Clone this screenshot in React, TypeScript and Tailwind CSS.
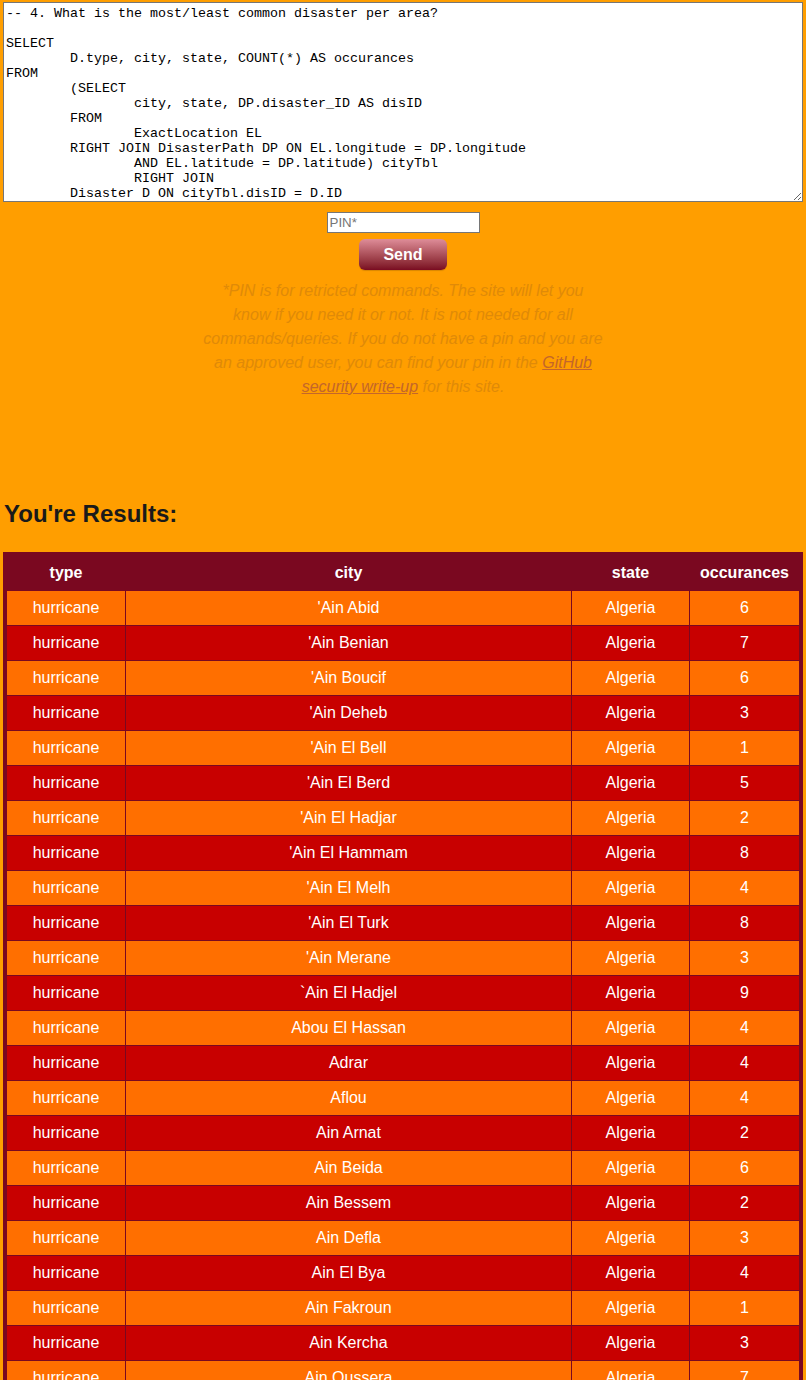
import { useState } from "react";

/* ── Query + results data ───────────────────────────────── */
const QUERY = `-- 4. What is the most/least common disaster per area?

SELECT
\tD.type, city, state, COUNT(*) AS occurances
FROM
\t(SELECT
\t\tcity, state, DP.disaster_ID AS disID
\tFROM
\t\tExactLocation EL
\tRIGHT JOIN DisasterPath DP ON EL.longitude = DP.longitude
\t\tAND EL.latitude = DP.latitude) cityTbl
\t\tRIGHT JOIN
\tDisaster D ON cityTbl.disID = D.ID
GROUP BY D.type, city, state
ORDER BY city;`;

const HEADERS = ["type", "city", "state", "occurances"];

const ROWS: [string, string, string, number][] = [
  ["hurricane", "'Ain Abid", "Algeria", 6],
  ["hurricane", "'Ain Benian", "Algeria", 7],
  ["hurricane", "'Ain Boucif", "Algeria", 6],
  ["hurricane", "'Ain Deheb", "Algeria", 3],
  ["hurricane", "'Ain El Bell", "Algeria", 1],
  ["hurricane", "'Ain El Berd", "Algeria", 5],
  ["hurricane", "'Ain El Hadjar", "Algeria", 2],
  ["hurricane", "'Ain El Hammam", "Algeria", 8],
  ["hurricane", "'Ain El Melh", "Algeria", 4],
  ["hurricane", "'Ain El Turk", "Algeria", 8],
  ["hurricane", "'Ain Merane", "Algeria", 3],
  ["hurricane", "`Ain El Hadjel", "Algeria", 9],
  ["hurricane", "Abou El Hassan", "Algeria", 4],
  ["hurricane", "Adrar", "Algeria", 4],
  ["hurricane", "Aflou", "Algeria", 4],
  ["hurricane", "Ain Arnat", "Algeria", 2],
  ["hurricane", "Ain Beida", "Algeria", 6],
  ["hurricane", "Ain Bessem", "Algeria", 2],
  ["hurricane", "Ain Defla", "Algeria", 3],
  ["hurricane", "Ain El Bya", "Algeria", 4],
  ["hurricane", "Ain Fakroun", "Algeria", 1],
  ["hurricane", "Ain Kercha", "Algeria", 3],
  ["hurricane", "Ain Oussera", "Algeria", 7],
  ["hurricane", "Ain Sefra", "Algeria", 2],
  ["hurricane", "Ain Smara", "Algeria", 5],
];

/* ── Main component ──────────────────────────────────────── */
export default function App() {
  const [query, setQuery] = useState(QUERY);
  const [pin, setPin]     = useState("");

  return (
    <div className="min-h-[1380px] bg-[#ff9e00] font-['Liberation_Sans',Arial,sans-serif] pt-[2px] pb-10">

      {/* ── Query box ── */}
      <div className="px-[3px]">
        <textarea
          value={query}
          onChange={(e) => setQuery(e.target.value)}
          spellCheck={false}
          className="block w-full h-[200px] bg-white border border-[#767676] pt-[3px] px-[2px] pb-0 font-['Liberation_Mono','Courier_New',monospace] text-[13.33px] leading-[15px] text-black whitespace-pre overflow-hidden resize outline-none [tab-size:8]"
        />
      </div>

      {/* ── PIN + send ── */}
      <div className="flex flex-col items-center">
        <input
          value={pin}
          onChange={(e) => setPin(e.target.value)}
          placeholder="PIN*"
          className="mt-[10px] w-[153px] h-[21px] bg-white border border-[#767676] px-[2px] text-[13.33px] text-black placeholder:text-[#757575] outline-none"
        />
        <button className="mt-[6px] w-[88px] h-[31px] rounded-[6px] bg-gradient-to-b from-[#de8d99] to-[#790a21] text-white font-bold text-[16px] shadow-[0_1px_1px_rgba(0,0,0,0.15)]">
          Send
        </button>
        <p className="mt-[9px] w-[401px] text-center italic text-[16px] leading-[24px] text-[#e08a08]">
          *PIN is for retricted commands. The site will let you know if you need it or not. It is not needed for all commands/queries. If you do not have a pin and you are an approved user, you can find your pin in the{" "}
          <a href="#" className="underline text-[#c4662a]">GitHub security write-up</a>{" "}
          for this site.
        </p>
      </div>

      {/* ── Results ── */}
      <h2 className="mt-[101px] ml-[4px] text-[24px] leading-[28px] font-bold text-[#1a1a1a]">
        You're Results:
      </h2>

      <div className="mt-[24px] mx-[3px] grid grid-cols-[118px_445px_117px_109px] gap-px bg-[#7a0820] p-[4px] text-white text-[16px]">
        {HEADERS.map((h) => (
          <div key={h} className="h-[34px] flex items-center justify-center font-bold">
            {h}
          </div>
        ))}
        {ROWS.map((row, i) =>
          row.map((cell, j) => (
            <div
              key={`${i}-${j}`}
              className={`h-[34px] flex items-center justify-center ${
                i % 2 === 0 ? "bg-[#ff6f00]" : "bg-[#c80000]"
              }`}
            >
              {cell}
            </div>
          ))
        )}
      </div>
    </div>
  );
}
